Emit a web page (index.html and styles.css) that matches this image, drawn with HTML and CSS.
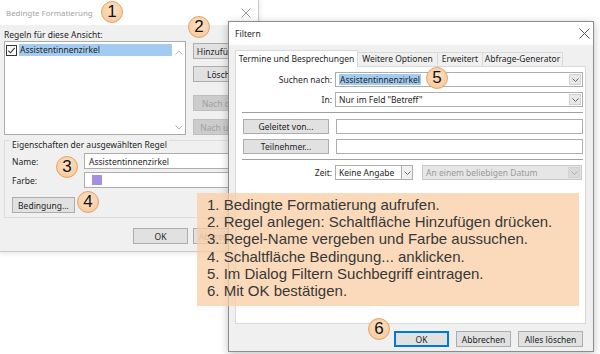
FILE: index.html
```html
<!DOCTYPE html>
<html lang="de">
<head>
  <meta charset="UTF-8">
  <title>Bedingte Formatierung</title>
  <link rel="stylesheet" href="styles.css">
</head>
<body>
  <div class="win win1">
    <div class="titlebar">
      <span>Bedingte Formatierung</span>
      <svg class="close" width="10" height="10" viewBox="0 0 10 10"><path d="M0.5 0.5L9.5 9.5M9.5 0.5L0.5 9.5" stroke="#9a9a9a" stroke-width="1"/></svg>
    </div>
    <div class="body1">
      <div class="lbl">Regeln für diese Ansicht:</div>
      <div class="rules">
        <div class="listbox">
          <div class="item">
            <svg class="check" width="11" height="11" viewBox="0 0 11 11"><rect x="0.5" y="0.5" width="10" height="10" fill="#fff" stroke="#333"/><path d="M2.2 5.6L4.4 7.8L8.8 2.8" fill="none" stroke="#333" stroke-width="1.1"/></svg>
            <span class="sel">Assistentinnenzirkel</span>
          </div>
          <div class="scroll">
            <svg width="8" height="5" viewBox="0 0 8 5"><path d="M0.5 4.5L4 1L7.5 4.5" fill="none" stroke="#b4b4b4"/></svg>
            <svg width="8" height="5" viewBox="0 0 8 5"><path d="M0.5 0.5L4 4L7.5 0.5" fill="none" stroke="#b4b4b4"/></svg>
          </div>
        </div>
        <div class="side">
          <div class="btn">Hinzufügen...</div>
          <div class="btn b2">Löschen</div>
          <div class="btn off b3">Nach oben</div>
          <div class="btn off b4">Nach unten</div>
        </div>
      </div>
      <div class="group">
        <div class="legend">Eigenschaften der ausgewählten Regel</div>
        <div class="frow">
          <span class="flbl">Name:</span>
          <div class="input">Assistentinnenzirkel</div>
        </div>
        <div class="frow f2">
          <span class="flbl">Farbe:</span>
          <div class="input"><span class="swatch"></span></div>
        </div>
        <div class="btn cond">Bedingung...</div>
      </div>
      <div class="foot1">
        <div class="btn w55">OK</div>
        <div class="btn w55 muted">Abbrechen</div>
      </div>
    </div>
  </div>

  <div class="win win2">
    <div class="titlebar">
      <span>Filtern</span>
      <svg class="close" width="11" height="11" viewBox="0 0 11 11"><path d="M0.5 0.5L10.5 10.5M10.5 0.5L0.5 10.5" stroke="#555" stroke-width="1"/></svg>
    </div>
    <div class="body2">
      <div class="tabs">
        <div class="tab active">Termine und Besprechungen</div>
        <div class="tab t2">Weitere Optionen</div>
        <div class="tab t3">Erweitert</div>
        <div class="tab t4">Abfrage-Generator</div>
      </div>
      <div class="panel">
        <div class="prow">
          <span class="plbl">Suchen nach:</span>
          <div class="combo wide">
            <span class="sel">Assistentinnenzirkel</span>
            <span class="dd"><svg width="7" height="4" viewBox="0 0 7 4"><path d="M0.5 0.5L3.5 3.5L6.5 0.5" fill="none" stroke="#666"/></svg></span>
          </div>
        </div>
        <div class="prow">
          <span class="plbl">In:</span>
          <div class="combo wide">
            <span>Nur im Feld "Betreff"</span>
            <span class="dd"><svg width="7" height="4" viewBox="0 0 7 4"><path d="M0.5 0.5L3.5 3.5L6.5 0.5" fill="none" stroke="#666"/></svg></span>
          </div>
        </div>
        <div class="sep"></div>
        <div class="prow brow">
          <div class="btn pbtn">Geleitet von...</div>
          <div class="input grow"></div>
        </div>
        <div class="prow brow">
          <div class="btn pbtn">Teilnehmer...</div>
          <div class="input grow"></div>
        </div>
        <div class="sep"></div>
        <div class="prow">
          <span class="plbl">Zeit:</span>
          <div class="combo small">
            <span>Keine Angabe</span>
            <span class="dd box"><svg width="7" height="4" viewBox="0 0 7 4"><path d="M0.5 0.5L3.5 3.5L6.5 0.5" fill="none" stroke="#666"/></svg></span>
          </div>
          <div class="combo disabled">
            <span>An einem beliebigen Datum</span>
            <span class="dd"><svg width="7" height="4" viewBox="0 0 7 4"><path d="M0.5 0.5L3.5 3.5L6.5 0.5" fill="none" stroke="#aaa"/></svg></span>
          </div>
        </div>
      </div>
      <div class="foot2">
        <div class="btn w55 focus">OK</div>
        <div class="btn w55">Abbrechen</div>
        <div class="btn w65">Alles löschen</div>
      </div>
    </div>
  </div>

  <div class="note">
    <div>1. Bedingte Formatierung aufrufen.</div>
    <div>2. Regel anlegen: Schaltfläche Hinzufügen drücken.</div>
    <div>3. Regel-Name vergeben und Farbe aussuchen.</div>
    <div>4. Schaltfläche Bedingung... anklicken.</div>
    <div>5. Im Dialog Filtern Suchbegriff eintragen.</div>
    <div>6. Mit OK bestätigen.</div>
  </div>

  <span class="num n1">1</span>
  <span class="num n2">2</span>
  <span class="num n3">3</span>
  <span class="num n4">4</span>
  <span class="num n5">5</span>
  <span class="num n6">6</span>
</body>
</html>
```

FILE: styles.css
```css
* {
  box-sizing: border-box;
}
body {
  margin: 0;
  width: 600px;
  height: 354px;
  overflow: hidden;
  position: relative;
  background: #fff;
  font-family: "Noto Sans", "Open Sans", sans-serif;
  font-size: 8.5px;
  color: #1e1e1e;
}

/* windows */
.win {
  position: absolute;
  display: flex;
  flex-direction: column;
  background: #f0f0f0;
}
.win1 {
  left: -1px;
  top: -1px;
  width: 260px;
  height: 253px;
  border: 1px solid #cacaca;
  box-shadow: 0 1px 5px rgba(0, 0, 0, 0.12);
}
.win2 {
  left: 228px;
  top: 21px;
  width: 366px;
  height: 331px;
  border: 1px solid #8c8c8c;
  box-shadow: 0 2px 8px rgba(0, 0, 0, 0.25);
}
.titlebar {
  flex: none;
  height: 24px;
  background: #fff;
  display: flex;
  align-items: center;
  justify-content: space-between;
  padding: 0 7px 0 7px;
  font-size: 8.6px;
}
.win1 .titlebar {
  height: 25px;
  padding: 1px 7px 0 6px;
  font-size: 7.9px;
  color: #a3a3a3;
}
.win2 .titlebar {
  height: 23px;
  padding: 0 3px 0 6px;
}

/* common controls */
.btn {
  height: 16px;
  border: 1px solid #adadad;
  background: #e1e1e1;
  display: flex;
  align-items: center;
  justify-content: center;
  white-space: nowrap;
  overflow: hidden;
}
.btn.off {
  background: #cccccc;
  border-color: #bfbfbf;
  color: #a0a0a0;
}
.btn.muted {
  color: #8a8a8a;
}
.btn.focus {
  border: 1px solid #0078d7;
  box-shadow: inset 0 0 0 1px #0078d7;
}
.w55 {
  width: 55px;
}
.w65 {
  width: 65px;
}
.input {
  height: 16px;
  background: #fff;
  border: 1px solid #adadad;
  display: flex;
  align-items: center;
  padding-left: 4px;
}
.sel {
  background: #a3cbef;
  padding: 0 1px;
}

/* Bedingte Formatierung */
.body1 {
  padding: 4px 4px 0 4px;
}
.lbl {
  line-height: 12px;
}
.rules {
  display: flex;
}
.listbox {
  width: 182px;
  height: 94px;
  background: #fff;
  border: 1px solid #acacac;
  display: flex;
  justify-content: space-between;
}
.item {
  display: flex;
  align-items: center;
  height: 12px;
  margin: 2px 0 0 1px;
  flex: 1;
}
.item .check {
  margin-right: 2px;
}
.item .sel {
  flex: 1;
  height: 12px;
  line-height: 12px;
  padding-left: 1px;
}
.scroll {
  width: 13px;
  display: flex;
  flex-direction: column;
  justify-content: space-between;
  align-items: center;
  padding: 8px 0 4px;
}
.side {
  margin-left: 7px;
  width: 61px;
  padding-top: 2px;
}
.side .b2 {
  margin-top: 7px;
}
.side .b3 {
  margin-top: 13px;
}
.side .b4 {
  margin-top: 8px;
}
.group {
  margin-top: 5px;
  width: 248px;
  height: 78px;
  border: 1px solid #dcdcdc;
  padding-left: 7px;
}
.legend {
  width: fit-content;
  margin: -2px 0 0 -2px;
  padding: 0 2px;
  line-height: 12px;
  background: #f0f0f0;
}
.frow {
  display: flex;
  align-items: center;
  margin-top: 2px;
}
.frow.f2 {
  margin-top: 3px;
}
.flbl {
  width: 72px;
}
.frow .input {
  flex: 1;
}
.swatch {
  width: 10px;
  height: 10px;
  margin-left: 3px;
  background: #a78fe0;
}
.btn.cond {
  width: 63px;
  margin-top: 9px;
}
.foot1 {
  display: flex;
  justify-content: flex-end;
  gap: 5px;
  margin: 10px 6px 0 0;
}

/* Filtern */
.body2 {
  flex: 1;
  display: flex;
  flex-direction: column;
  padding: 5px 7px 0 6px;
}
.tabs {
  display: flex;
  align-items: flex-end;
  height: 16px;
}
.tab {
  height: 14px;
  line-height: 12px;
  border: 1px solid #d9d9d9;
  border-bottom: 0;
  border-left: 0;
  background: #f0f0f0;
  text-align: center;
  white-space: nowrap;
}
.tab.active {
  width: 123px;
  height: 17px;
  line-height: 15px;
  margin-bottom: -1px;
  border-left: 1px solid #d9d9d9;
  background: #fff;
  position: relative;
}
.tab.t2 {
  width: 80px;
}
.tab.t3 {
  width: 45px;
}
.tab.t4 {
  width: 80px;
}
.panel {
  height: 258px;
  background: #fff;
  border: 1px solid #d9d9d9;
  padding: 0 2px 0 0;
}
.prow {
  display: flex;
  align-items: center;
  height: 15px;
  margin-top: 5px;
}
.plbl {
  width: 96px;
  text-align: right;
  margin-right: 3px;
}
.combo {
  height: 15px;
  display: flex;
  align-items: center;
  background: #fff;
  border: 1px solid #adadad;
  padding-left: 3px;
  white-space: nowrap;
}
.combo.wide {
  flex: 1;
}
.combo.small {
  width: 78px;
}
.combo.disabled {
  margin-left: 9px;
  width: 160px;
  background: #e6e6e6;
  border-color: #c8c8c8;
  color: #9a9a9a;
}
.combo .sel {
  line-height: 11px;
}
.dd {
  margin-left: auto;
  margin-right: 1px;
  width: 12px;
  height: 11px;
  display: flex;
  align-items: center;
  justify-content: center;
  background: #e8e8e8;
  border: 1px solid #d2d2d2;
}
.dd.box {
  height: 15px;
  margin-right: -1px;
  border-color: #adadad;
  background: #f0f0f0;
}
.combo.disabled .dd {
  background: #dadada;
  border-color: #d2d2d2;
}
.sep {
  height: 1px;
  margin: 5px 0 0 6px;
  background: #a0a0a0;
}
.prow.brow {
  height: 15px;
  padding-left: 7px;
}
.prow.brow .btn {
  height: 15px;
}
.pbtn {
  width: 86px;
  margin-right: 7px;
}
.input.grow {
  flex: 1;
  height: 15px;
}
.sep + .brow {
  margin-top: 6px;
}
.foot2 {
  display: flex;
  justify-content: flex-end;
  gap: 7px;
  margin: 7px 3px 0 0;
}

/* overlay */
.note {
  position: absolute;
  left: 197px;
  top: 193px;
  width: 382px;
  height: 113px;
  padding: 3px 0 0 10px;
  background: rgba(248, 206, 166, 0.76);
  font-family: "Liberation Sans", Arial, sans-serif;
  font-size: 15px;
  line-height: 17.2px;
  color: #383838;
}
.num {
  position: absolute;
  width: 22px;
  height: 22px;
  border-radius: 50%;
  border: 1px solid #e3a46c;
  background: radial-gradient(circle at 50% 40%, #fde3c8 0%, #f8cda2 70%, #f2bb88 100%);
  font-family: "Liberation Sans", Arial, sans-serif;
  font-size: 17px;
  line-height: 20px;
  text-align: center;
  color: #111;
}
.n1 { left: 101px; top: 1px; }
.n2 { left: 188px; top: 16px; }
.n3 { left: 56px; top: 156px; }
.n4 { left: 77px; top: 191px; }
.n5 { left: 426px; top: 67px; }
.n6 { left: 368px; top: 318px; }
```
